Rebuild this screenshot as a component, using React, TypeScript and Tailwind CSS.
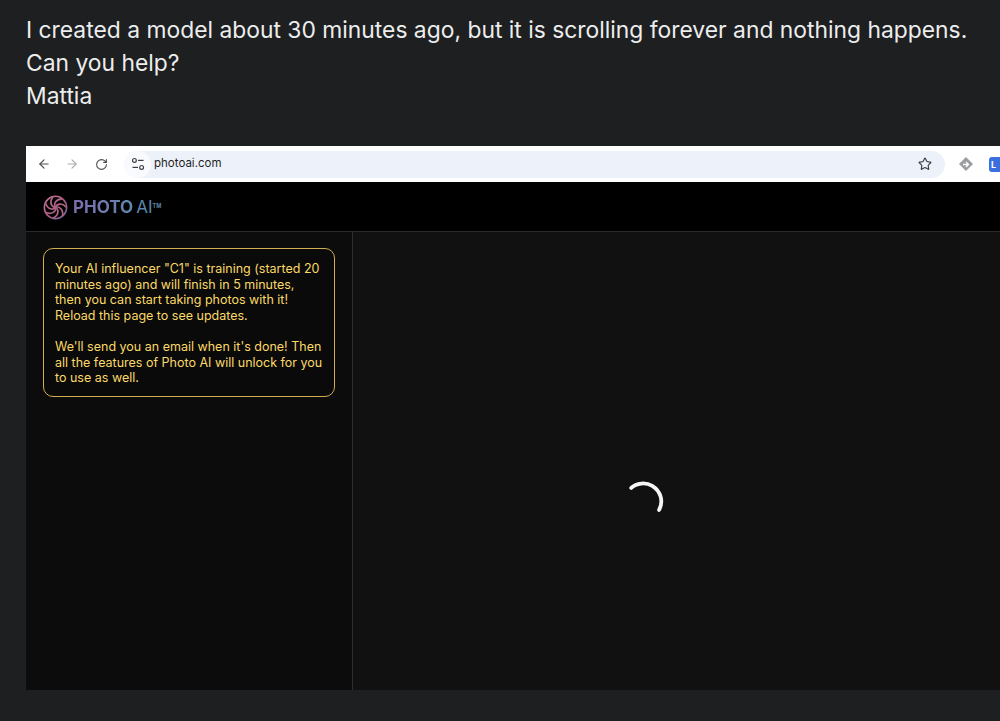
import React from 'react';
import { ArrowLeft, ArrowRight, RotateCw, Star } from 'lucide-react';

const SANS = "font-['Inter',sans-serif]";

const SiteControls = () => (
  <svg width="14" height="14" viewBox="0 0 14 14" fill="none" stroke="#3c4043" strokeWidth="1.2">
    <circle cx="3.4" cy="3.4" r="1.9" />
    <path d="M7 3.4h5.5" />
    <circle cx="10.6" cy="10.4" r="1.9" />
    <path d="M1.5 10.4H7" />
  </svg>
);

const Logo = () => (
  <svg width="25" height="25" viewBox="0 0 26 26" fill="none" strokeWidth="2" strokeLinecap="round">
    <defs>
      <linearGradient id="swirl" gradientUnits="userSpaceOnUse" x1="3" y1="3" x2="23" y2="23">
        <stop offset="0" stopColor="#c27290" />
        <stop offset="0.55" stopColor="#a85c80" />
        <stop offset="1" stopColor="#76659f" />
      </linearGradient>
    </defs>
    <circle cx="13" cy="13" r="11.6" stroke="url(#swirl)" strokeWidth="1.6" />
    {[0, 51.4, 102.8, 154.2, 205.6, 257, 308.4].map((a) => (
      <path key={a} d="M13 13.5C10.5 9.5 13 4.5 19.5 4" stroke="url(#swirl)" strokeWidth="1.7" transform={`rotate(${a} 13 13)`} />
    ))}
  </svg>
);

const Toolbar = () => (
  <div className="h-9 bg-white flex items-center shrink-0">
    <ArrowLeft size={14} strokeWidth={2} className="text-[#4a4d51] ml-[11px] shrink-0" />
    <ArrowRight size={14} strokeWidth={2} className="text-[#a9acb0] ml-[14px] shrink-0" />
    <RotateCw size={13} strokeWidth={2} className="text-[#4a4d51] ml-[16px] shrink-0" />
    <div className="ml-[16px] h-[27px] w-[821px] rounded-full bg-[#edf2fa] flex items-center shrink-0">
      <div className="w-[27px] h-[27px] rounded-full bg-[#f8fafd] flex items-center justify-center">
        <SiteControls />
      </div>
      <span className={`${SANS} text-[11.5px] text-[#1f1f1f] ml-[3px]`}>photoai.com</span>
      <Star size={14} strokeWidth={2} className="text-[#3c4043] ml-auto mr-[13px]" />
    </div>
    <svg width="16" height="16" viewBox="0 0 16 16" className="ml-[13px] shrink-0">
      <path d="M8 1l7 7-7 7-7-7z" fill="#9b9da0" />
      <path d="M5 8.5h5M8 6l2.5 2.5L8 11" fill="none" stroke="#fff" strokeWidth="1.3" />
    </svg>
    <div className="ml-[15px] w-[12px] h-[15px] rounded-l-[3px] bg-[#3b6fe0] flex items-center pl-[2px] shrink-0">
      <span className={`${SANS} text-[9px] leading-none font-bold text-white`}>L</span>
    </div>
  </div>
);

const Notice = () => (
  <div className={`${SANS} border border-[#d2ae50] rounded-[10px] bg-[#0a0a0a] pt-[12px] pb-[10px] pl-[11px] pr-[11px] text-[12.5px] leading-[15.6px] text-[#fbd968]`}>
    <p>
      Your AI influencer "C1" is training (started 20 minutes ago) and will finish in 5 minutes, then you can start
      taking photos with it! Reload this page to see updates.
    </p>
    <p className="mt-[15.6px]">
      We'll send you an email when it's done! Then all the features of Photo AI will unlock for you to use as well.
    </p>
  </div>
);

export default function App() {
  return (
    <div className="h-[721px] w-[1000px] overflow-hidden bg-[#1e1f21] flex flex-col">
      <div className={`${SANS} pl-[26px] pt-[14px] text-[22.85px] leading-[33px] text-[#eceded] whitespace-nowrap`}>
        <div>I created a model about 30 minutes ago, but it is scrolling forever and nothing happens.</div>
        <div>Can you help?</div>
        <div>Mattia</div>
      </div>

      <div className="ml-[26px] mt-[33px] w-[974px] h-[544px] flex flex-col shrink-0 overflow-hidden">
        <Toolbar />
        <div className="h-[50px] bg-black border-b border-[#2a2a2a] flex items-center pl-[17px] pt-[2px] shrink-0">
          <Logo />
          <span className={`${SANS} ml-[5px] text-[17px] font-bold bg-linear-to-r from-[#7d6cae] to-[#5d88ab] bg-clip-text text-transparent`}>PHOTO</span>
          <span className={`${SANS} ml-[3px] text-[17px] text-[#5b87a6]`}>AI</span>
          <span className={`${SANS} text-[5.5px] font-bold text-[#5b87a6] self-start mt-[18px]`}>TM</span>
        </div>
        <div className="flex flex-1 min-h-0">
          <aside className="w-[327px] shrink-0 bg-[#0c0c0c] border-r border-[#2e2e2e] pl-[17px] pr-[17px] pt-[16px]">
            <Notice />
          </aside>
          <main className="flex-1 bg-[#111111] flex items-start justify-center">
            <svg width="42" height="42" viewBox="0 0 40 40" fill="none" className="mt-[247px] mr-[59px]">
              <path d="M5 8.5C10 3.5 19 3 25 6.5C33 11.5 36 21 31.5 29.5" stroke="#f5f5f5" strokeWidth="3.6" strokeLinecap="round" />
            </svg>
          </main>
        </div>
      </div>
    </div>
  );
}
